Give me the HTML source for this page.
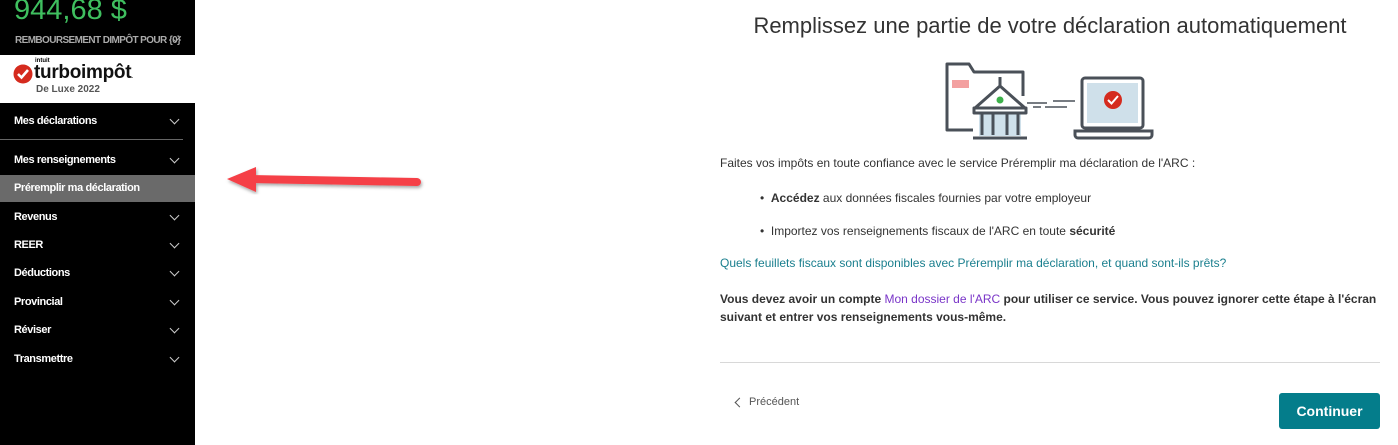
<!DOCTYPE html>
<html><head><meta charset="utf-8"><style>
body{margin:0;width:1398px;height:445px;overflow:hidden;background:#fff;font-family:"Liberation Sans",Arial,sans-serif;position:relative}
.sb{position:absolute;left:0;top:0;width:195px;height:445px;background:#000}
.amt{position:absolute;left:14px;top:-6px;color:#3fbf5f;font-size:29px}
.rb{position:absolute;left:15px;top:35px;color:#aaa;font-size:10px;font-weight:bold;letter-spacing:-0.6px}
.logo{position:absolute;left:0;top:55px;width:195px;height:48px;background:#fff}
.nav{position:absolute;left:14px;color:#fff;font-size:11px;font-weight:bold;letter-spacing:-0.4px}
.chev{position:absolute;left:171px;width:6px;height:6px;border-right:1.2px solid #ccc;border-bottom:1.2px solid #ccc;transform:rotate(45deg)}
.hl{position:absolute;left:0;top:175px;width:195px;height:27px;background:#6a6a6a}
.t{position:absolute;font-size:12px;color:#333}
</style></head><body>
<div class="sb">
<div class="amt">944,68 $</div>
<div class="rb">REMBOURSEMENT DIMPÔT POUR {0}</div>
<div style="position:absolute;left:175px;top:34px;width:3px;height:7px;border-right:1.3px solid #aaa;border-bottom:1.3px solid #aaa;transform:rotate(45deg)"></div>
<div class="logo">
<svg style="position:absolute;left:13px;top:9px" width="20" height="20"><circle cx="10" cy="10" r="9.5" fill="#d52b1e"/><path d="M5 10l3.5 3.5L15 6" stroke="#fff" stroke-width="2.6" fill="none"/></svg>
<div style="position:absolute;left:35px;top:3px;font-size:6px;font-weight:bold">intuit</div>
<div style="position:absolute;left:34px;top:7px;font-size:19px;font-weight:bold;letter-spacing:-0.3px;color:#111">turboimpôt<span style="font-size:6px">.</span></div>
<div style="position:absolute;left:36px;top:29px;font-size:10px;font-weight:bold;color:#555">De Luxe 2022</div>
</div>
<div class="nav" style="top:115px">Mes déclarations</div><div class="chev" style="top:116px"></div>
<div style="position:absolute;left:0;top:139px;width:183px;height:1px;background:#666"></div>
<div class="nav" style="top:154px">Mes renseignements</div><div class="chev" style="top:155px"></div>
<div class="hl"></div>
<div class="nav" style="top:182px">Préremplir ma déclaration</div>
<div class="nav" style="top:211px">Revenus</div><div class="chev" style="top:212px"></div>
<div class="nav" style="top:239px">REER</div><div class="chev" style="top:240px"></div>
<div class="nav" style="top:267px">Déductions</div><div class="chev" style="top:268px"></div>
<div class="nav" style="top:296px">Provincial</div><div class="chev" style="top:297px"></div>
<div class="nav" style="top:324px">Réviser</div><div class="chev" style="top:325px"></div>
<div class="nav" style="top:353px">Transmettre</div><div class="chev" style="top:354px"></div>
</div>
<svg style="position:absolute;left:220px;top:160px" width="210" height="40"><defs><filter id="s"><feDropShadow dx="1" dy="2" stdDeviation="1.5" flood-opacity="0.35"/></filter></defs><g filter="url(#s)"><line x1="30" y1="19" x2="197" y2="22" stroke="#f54047" stroke-width="8" stroke-linecap="round"/><polygon points="7,19 36,7 36,32" fill="#f54047"/></g></svg>
<div style="position:absolute;left:720px;top:13px;width:660px;text-align:center;font-size:22px;color:#333">Remplissez une partie de votre déclaration automatiquement</div>
<svg style="position:absolute;left:930px;top:50px" width="240" height="95" viewBox="0 0 240 95">
<g fill="none" stroke="#4a5058" stroke-width="3" stroke-linejoin="round">
<path d="M43 80H17V14h22l5 8h49v24"/>
</g>
<rect x="22" y="30" width="17" height="8" fill="#f3a0a0"/>
<rect x="49" y="62" width="42" height="24" fill="#cfe0ea"/>
<g fill="none" stroke="#4a5058" stroke-width="3" stroke-linejoin="round">
<path d="M45 58L70 36L95 58z" fill="#fff"/><path d="M70 36v-9"/>
<rect x="44" y="58" width="52" height="5" fill="#fff"/>
<path d="M52 63v22M63 63v22M77 63v22M88 63v22M43 88h54"/>
</g>
<circle cx="70" cy="50" r="3.5" fill="#3cb14a"/>
<g stroke="#4a5058" stroke-width="1.5"><path d="M97 53h20M123 51h22M103 57h8M115 57h22"/></g>
<rect x="152" y="28" width="61" height="50" rx="3" fill="#fff" stroke="#4a5058" stroke-width="3"/>
<rect x="157" y="33" width="51" height="40" fill="#cfe0ea"/>
<path d="M145 81h77v4a3 3 0 0 1-3 3h-71a3 3 0 0 1-3-3z" fill="#fff" stroke="#4a5058" stroke-width="3"/>
<circle cx="183" cy="50" r="9" fill="#d52b1e"/><path d="M178 50l3.5 3.5L188 46" stroke="#fff" stroke-width="2" fill="none"/>
</svg>
<div class="t" style="left:720px;top:156px">Faites vos impôts en toute confiance avec le service Préremplir ma déclaration de l'ARC :</div>
<div class="t" style="left:760px;top:191px">•&nbsp; <b>Accédez</b> aux données fiscales fournies par votre employeur</div>
<div class="t" style="left:760px;top:224px">•&nbsp; Importez vos renseignements fiscaux de l'ARC en toute <b>sécurité</b></div>
<div class="t" style="left:720px;top:256px;color:#1a7f8e">Quels feuillets fiscaux sont disponibles avec Préremplir ma déclaration, et quand sont-ils prêts?</div>
<div class="t" style="left:720px;top:290px;font-weight:bold;line-height:18px;width:670px">Vous devez avoir un compte <span style="font-weight:normal;color:#7a35c8">Mon dossier de l'ARC</span> pour utiliser ce service. Vous pouvez ignorer cette étape à l'écran suivant et entrer vos renseignements vous-même.</div>
<div style="position:absolute;left:720px;top:362px;width:660px;height:1px;background:#d8d8d8"></div>
<div style="position:absolute;left:736px;top:399px;width:6px;height:6px;border-left:1.3px solid #555;border-bottom:1.3px solid #555;transform:rotate(45deg)"></div>
<div class="t" style="left:749px;top:396px;font-size:11px;color:#555">Précédent</div>
<div style="position:absolute;left:1279px;top:393px;width:101px;height:36px;background:#047d8b;border-radius:3px;color:#fff;font-weight:bold;font-size:14px;text-align:center;line-height:36px">Continuer</div>
</body></html>
